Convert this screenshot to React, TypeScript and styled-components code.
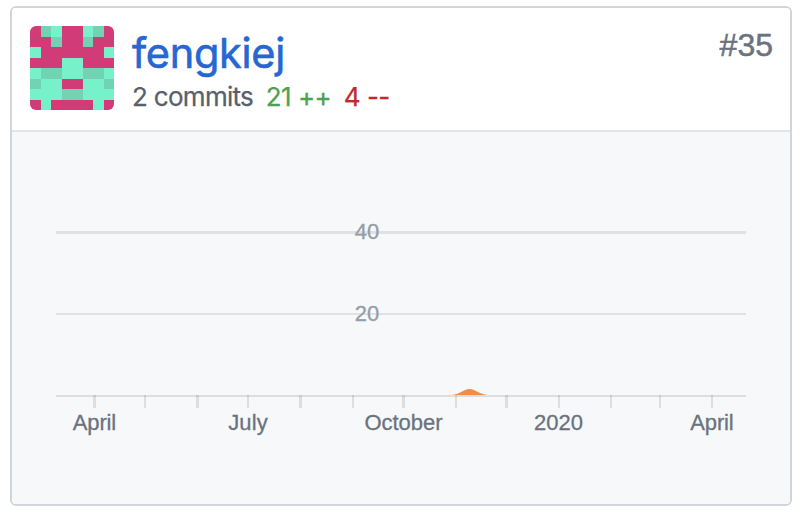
import React from "react";
import styled, { createGlobalStyle } from "styled-components";

const GlobalStyle = createGlobalStyle`
  * { box-sizing: border-box; }
  body { margin: 0; background: #fff; font-family: Inter, "Liberation Sans", sans-serif; }
`;

const Page = styled.main`
  width: 806px;
  height: 512px;
  padding: 6px 14px 6px 10px;
`;

const Card = styled.article`
  display: flex;
  flex-direction: column;
  width: 782px;
  height: 500px;
  border: 2px solid #d1d5da;
  border-radius: 6px;
  overflow: hidden;
`;

const Header = styled.header`
  display: flex;
  height: 124px;
  padding: 18px 17px 0 18px;
  border-bottom: 2px solid #e1e4e8;
  background: #fff;
`;

const Avatar = styled.svg`
  display: block;
  flex: none;
  width: 84px;
  height: 84px;
  border-radius: 6px;
`;

const Details = styled.div`
  flex: 1;
  margin-left: 18px;
`;

const Name = styled.a`
  display: block;
  height: 54px;
  line-height: 54px;
  font-size: 41.5px;
  letter-spacing: -0.3px;
  color: #2767d1;
  -webkit-text-stroke: 0.6px currentColor;
`;

const Stats = styled.div`
  display: flex;
  height: 34px;
  line-height: 34px;
  font-size: 26px;
  white-space: pre;
`;

const Stat = styled.span<{ $color: string; $gap?: number; $spacing?: number }>`
  color: ${(p) => p.$color};
  margin-left: ${(p) => p.$gap ?? 0}px;
  letter-spacing: ${(p) => p.$spacing ?? 0}px;
  -webkit-text-stroke: 0.25px currentColor;
`;

const Rank = styled.span`
  height: 38px;
  line-height: 38px;
  font-family: "Liberation Sans", sans-serif;
  font-size: 32px;
  color: #6a737d;
  -webkit-text-stroke: 0.5px currentColor;
`;

const Chart = styled.svg`
  display: block;
  width: 778px;
  height: 372px;
  background: #f6f8fa;
  font-family: "Liberation Sans", sans-serif;
  font-size: 22px;
  text-anchor: middle;
`;

const ChartLabel = styled.text<{ $color: string }>`
  fill: ${(p) => p.$color};
  stroke: ${(p) => p.$color};
  stroke-width: 0.3px;
`;

const avatarRows = [
  "PMGPPGMP",
  "PPMPPMPP",
  "GPPPPPPG",
  "PPPGGPPP",
  "GMMGGMMG",
  "MGGPPGGM",
  "GGGMMGGG",
  "PGPPPPGP",
];
const avatarColors: Record<string, string> = { P: "#d03b78", G: "#76f1ca", M: "#70d3b2" };

const gridLines = [
  { y: 231, height: 3, label: "40", baseline: 239 },
  { y: 313, height: 2, label: "20", baseline: 321 },
];

const ticks: { x: number; width: number }[] = [
  { x: 93, width: 3 }, { x: 144, width: 2 }, { x: 196, width: 3 },
  { x: 247, width: 2 }, { x: 299, width: 3 }, { x: 352, width: 2 },
  { x: 402, width: 3 }, { x: 455, width: 2 }, { x: 505, width: 3 },
  { x: 558, width: 2 }, { x: 610, width: 2 }, { x: 659, width: 2 },
  { x: 711, width: 2 },
];

const months = [
  { x: 94.5, label: "April", width: 43.5 },
  { x: 248, label: "July", width: 39.5 },
  { x: 403.5, label: "October", width: 78 },
  { x: 558.5, label: "2020", width: 49 },
  { x: 712, label: "April", width: 43.5 },
];

export default function App() {
  return (
    <>
      <GlobalStyle />
      <Page>
        <Card>
          <Header>
            <Avatar viewBox="0 0 8 8" shapeRendering="crispEdges">
              {avatarRows.flatMap((row, y) =>
                [...row].map((cell, x) => (
                  <rect key={`${x}-${y}`} x={x} y={y} width={1} height={1} fill={avatarColors[cell]} />
                )),
              )}
            </Avatar>
            <Details>
              <Name>fengkiej</Name>
              <Stats>
                <Stat $color="#586069" $spacing={-0.7}>2 commits</Stat>
                <Stat $color="#4ba24f" $gap={12.5} $spacing={-0.5}>21 ++</Stat>
                <Stat $color="#c1292f" $gap={12.5} $spacing={-0.5}>4 --</Stat>
              </Stats>
            </Details>
            <Rank>#35</Rank>
          </Header>
          <Chart viewBox="12 132 778 372">
            {gridLines.map((line) => (
              <g key={line.label}>
                <rect x={56} y={line.y} width={690} height={line.height} fill="#dfe1e4" />
                <ChartLabel x={367} y={line.baseline} $color="#959da5">{line.label}</ChartLabel>
              </g>
            ))}
            <rect x={56} y={395} width={690} height={2} fill="#000" fillOpacity={0.1} />
            {ticks.map((tick) => (
              <rect key={tick.x} x={tick.x} y={395} width={tick.width} height={13} fill="#000" fillOpacity={0.1} />
            ))}
            <path d="M452 395C460 394 464 389 469.5 389S479 394 488 395Z" fill="#f08d49" />
            {months.map((month) => (
              <ChartLabel key={month.x} x={month.x} y={430} $color="#6a737d" textLength={month.width}>
                {month.label}
              </ChartLabel>
            ))}
          </Chart>
        </Card>
      </Page>
    </>
  );
}
